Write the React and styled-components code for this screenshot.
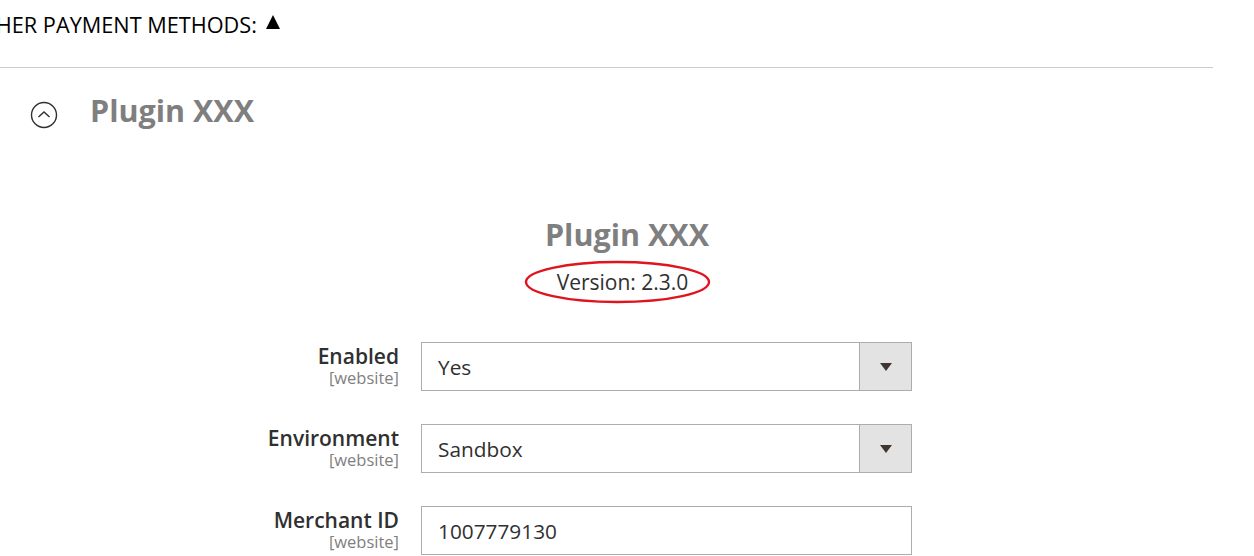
import React from "react";
import styled, { createGlobalStyle } from "styled-components";

const Global = createGlobalStyle`
  html, body { margin: 0; padding: 0; background: #fff; overflow: hidden; }
  body { font-family: "Open Sans", "Liberation Sans", sans-serif; color: #303030; }
`;

const Page = styled.div`
  width: 1254px;
  height: 556px;
  overflow: hidden;
`;

const SectionHeading = styled.div`
  display: flex;
  align-items: center;
  gap: 9px;
  margin-left: -33px;
  height: 46px;
  padding-top: 1px;
  font-size: 21.7px;
  text-transform: uppercase;
  color: #000;
  white-space: nowrap;
`;

const Toggle = styled.span`
  display: inline-block;
  width: 0;
  height: 0;
  border-left: 7.5px solid transparent;
  border-right: 7.5px solid transparent;
  border-bottom: 14px solid #000;
  margin-top: -5px;
`;

const Divider = styled.div`
  width: 1213px;
  height: 0;
  border-top: 1px solid #cccccc;
  margin-top: 20px;
`;

const GroupHeader = styled.div`
  display: flex;
  align-items: center;
  padding: 23px 0 0 30px;
  height: 38px;
`;

const CircleIcon = styled.svg`
  width: 28px;
  height: 28px;
  margin-top: 10px;
  flex: none;
`;

const GroupTitle = styled.h2`
  margin: 0 0 0 32px;
  font-size: 30.5px;
  font-weight: 700;
  color: #7f7f7f;
  line-height: 38px;
`;

const Intro = styled.div`
  display: flex;
  flex-direction: column;
  align-items: center;
  padding-top: 86px;
`;

const IntroTitle = styled.div`
  font-size: 30.5px;
  font-weight: 700;
  color: #7f7f7f;
  line-height: 38px;
`;

const Version = styled.div`
  position: relative;
  font-size: 21px;
  color: #303030;
  line-height: 28px;
  margin-top: 15px;
  margin-right: 9px;
`;

const Ellipse = styled.svg`
  position: absolute;
  left: -32px;
  top: -7px;
  width: 185px;
  height: 42px;
  overflow: visible;
  pointer-events: none;
`;

const Form = styled.div`
  display: flex;
  flex-direction: column;
  gap: 33px;
  padding-top: 46px;
`;

const Row = styled.div`
  display: grid;
  grid-template-columns: 399px 491px;
  column-gap: 22px;
  align-items: start;
`;

const Label = styled.div`
  text-align: right;
  display: flex;
  flex-direction: column;
  align-items: flex-end;
  padding-top: 2px;
`;

const LabelText = styled.span`
  font-size: 21px;
  font-weight: 600;
  color: #303030;
  line-height: 24px;
`;

const Scope = styled.span`
  font-size: 16.5px;
  color: #808080;
  line-height: 18px;
  margin-top: 1px;
`;

const Control = styled.div`
  box-sizing: border-box;
  height: 49px;
  border: 1px solid #adadad;
  display: flex;
  align-items: stretch;
  background: #fff;
`;

const Value = styled.div`
  flex: 1;
  display: flex;
  align-items: center;
  padding-left: 16px;
  font-size: 20.8px;
  color: #303030;
`;

const Caret = styled.div`
  width: 51px;
  background: #e3e3e3;
  border-left: 1px solid #adadad;
  display: flex;
  align-items: center;
  justify-content: center;
  &::after {
    content: "";
    border-left: 6px solid transparent;
    border-right: 6px solid transparent;
    border-top: 8px solid #41362f;
  }
`;

const fields = [
  { label: "Enabled", value: "Yes", select: true },
  { label: "Environment", value: "Sandbox", select: true },
  { label: "Merchant ID", value: "1007779130", select: false },
];

export default function App() {
  return (
    <Page>
      <Global />
      <SectionHeading>
        Other Payment Methods: <Toggle />
      </SectionHeading>
      <Divider />
      <GroupHeader>
        <CircleIcon viewBox="0 0 28 28">
          <circle cx="14" cy="14" r="12.5" fill="none" stroke="#303030" strokeWidth="1.4" />
          <path d="M8.5 16 L14 11 L19.5 16" fill="none" stroke="#303030" strokeWidth="1.4" />
        </CircleIcon>
        <GroupTitle>Plugin XXX</GroupTitle>
      </GroupHeader>
      <Intro>
        <IntroTitle>Plugin XXX</IntroTitle>
        <Version>
          Version: 2.3.0
          <Ellipse viewBox="0 0 185 42">
            <ellipse cx="92.5" cy="21" rx="91.5" ry="20" fill="none" stroke="#e0141e" strokeWidth="2.4" />
          </Ellipse>
        </Version>
      </Intro>
      <Form>
        {fields.map((f) => (
          <Row key={f.label}>
            <Label>
              <LabelText>{f.label}</LabelText>
              <Scope>[website]</Scope>
            </Label>
            <Control>
              <Value>{f.value}</Value>
              {f.select && <Caret />}
            </Control>
          </Row>
        ))}
      </Form>
    </Page>
  );
}
